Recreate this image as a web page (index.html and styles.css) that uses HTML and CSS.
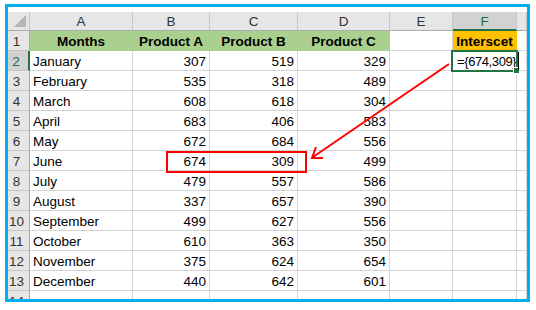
FILE: index.html
```html
<!DOCTYPE html>
<html>
<head>
<meta charset="utf-8">
<link rel="stylesheet" href="styles.css">
</head>
<body>
<div class="frame">
  <div class="sheet">
    <div class="ch corner"><span class="tri"></span></div>
    <div class="ch">A</div><div class="ch">B</div><div class="ch">C</div><div class="ch">D</div><div class="ch">E</div><div class="ch sel">F</div><div class="ch"></div>

    <div class="rh">1</div><div class="c hd">Months</div><div class="c hd">Product A</div><div class="c hd">Product B</div><div class="c hd">Product C</div><div class="c"></div><div class="c hd or">Interscet</div><div class="c"></div>

    <div class="rh rsel">2</div><div class="c">January</div><div class="c n">307</div><div class="c n">519</div><div class="c n">329</div><div class="c"></div><div class="c f2">={674,309}</div><div class="c"></div>
    <div class="rh">3</div><div class="c">February</div><div class="c n">535</div><div class="c n">318</div><div class="c n">489</div><div class="c"></div><div class="c"></div><div class="c"></div>
    <div class="rh">4</div><div class="c">March</div><div class="c n">608</div><div class="c n">618</div><div class="c n">304</div><div class="c"></div><div class="c"></div><div class="c"></div>
    <div class="rh">5</div><div class="c">April</div><div class="c n">683</div><div class="c n">406</div><div class="c n">583</div><div class="c"></div><div class="c"></div><div class="c"></div>
    <div class="rh">6</div><div class="c">May</div><div class="c n">672</div><div class="c n">684</div><div class="c n">556</div><div class="c"></div><div class="c"></div><div class="c"></div>
    <div class="rh">7</div><div class="c">June</div><div class="c n">674</div><div class="c n">309</div><div class="c n">499</div><div class="c"></div><div class="c"></div><div class="c"></div>
    <div class="rh">8</div><div class="c">July</div><div class="c n">479</div><div class="c n">557</div><div class="c n">586</div><div class="c"></div><div class="c"></div><div class="c"></div>
    <div class="rh">9</div><div class="c">August</div><div class="c n">337</div><div class="c n">657</div><div class="c n">390</div><div class="c"></div><div class="c"></div><div class="c"></div>
    <div class="rh">10</div><div class="c">September</div><div class="c n">499</div><div class="c n">627</div><div class="c n">556</div><div class="c"></div><div class="c"></div><div class="c"></div>
    <div class="rh">11</div><div class="c">October</div><div class="c n">610</div><div class="c n">363</div><div class="c n">350</div><div class="c"></div><div class="c"></div><div class="c"></div>
    <div class="rh">12</div><div class="c">November</div><div class="c n">375</div><div class="c n">624</div><div class="c n">654</div><div class="c"></div><div class="c"></div><div class="c"></div>
    <div class="rh">13</div><div class="c">December</div><div class="c n">440</div><div class="c n">642</div><div class="c n">601</div><div class="c"></div><div class="c"></div><div class="c"></div>
    <div class="rh">14</div><div class="c"></div><div class="c"></div><div class="c"></div><div class="c"></div><div class="c"></div><div class="c"></div><div class="c"></div>
  </div>
</div>
<div class="selbox"><span class="handle"></span></div>
<div class="cursor"></div>
<div class="redbox"></div>
<svg class="arrow" width="536" height="310" viewBox="0 0 536 310">
  <line x1="449" y1="64" x2="313" y2="157" stroke="#ff0000" stroke-width="2"/>
  <polyline points="316,147 312,158 323,158" fill="none" stroke="#ff0000" stroke-width="2"/>
</svg>
</body>
</html>
```
FILE: styles.css
```css
html, body {
  margin: 0;
  padding: 0;
  background: #ffffff;
}
body {
  width: 536px;
  height: 310px;
  position: relative;
  font-family: "Liberation Sans", Arial, sans-serif;
  font-size: 13.5px;
  color: #000;
}
.frame {
  margin: 4px 0 0 5px;
  width: 525px;
  height: 298px;
  box-sizing: border-box;
  border: 3px solid #00b0f0;
  padding-top: 5px;
  overflow: hidden;
  background: #fff;
}
.sheet {
  display: grid;
  grid-template-columns: 22px 103px 77px 88px 92px 63px 64px 1fr;
  grid-template-rows: 19px;
  grid-auto-rows: 20px;
}
.ch {
  background: #e6e6e6;
  border-right: 1px solid #c6c6c6;
  border-bottom: 1px solid #ababab;
  box-sizing: border-box;
  text-align: center;
  color: #333;
  line-height: 19px;
  font-size: 13.5px;
}
.ch.sel {
  background: #d2d2d2;
  color: #1e6b41;
  border-bottom: 2px solid #217346;
}
.corner {
  position: relative;
}
.tri {
  position: absolute;
  right: 3px;
  bottom: 3px;
  width: 0;
  height: 0;
  border-left: 12px solid transparent;
  border-bottom: 12px solid #b5b5b5;
}
.rh {
  background: #e6e6e6;
  border-right: 1px solid #ababab;
  border-bottom: 1px solid #c6c6c6;
  box-sizing: border-box;
  text-align: center;
  padding-right: 4px;
  color: #333;
  padding-top: 2px;
  line-height: 18px;
}
.rh.rsel {
  background: #d2d2d2;
  color: #1e6b41;
  border-right: 2px solid #217346;
}
.c {
  border-right: 1px solid #d4d4d4;
  border-bottom: 1px solid #d4d4d4;
  box-sizing: border-box;
  padding: 2px 3px 0 3px;
  line-height: 18px;
  white-space: nowrap;
}
.c.n {
  text-align: right;
}
.c.hd {
  background: #a9d08e;
  border-color: #a9d08e;
  font-weight: bold;
  text-align: center;
}
.c.or {
  background: #ffc000;
  border-color: #ffc000;
}
.c.f2 {
  overflow: visible;
  padding-left: 4px;
  font-size: 13px;
  letter-spacing: -0.4px;
}
.selbox {
  position: absolute;
  left: 451px;
  top: 50px;
  width: 67px;
  height: 22px;
  box-sizing: border-box;
  border: 2px solid #217346;
}
.handle {
  position: absolute;
  right: -4px;
  bottom: -4px;
  width: 5px;
  height: 5px;
  background: #217346;
  border: 1px solid #fff;
}
.cursor {
  position: absolute;
  left: 518px;
  top: 52px;
  width: 1px;
  height: 18px;
  background: #000;
}
.redbox {
  position: absolute;
  left: 166px;
  top: 151px;
  width: 141px;
  height: 22px;
  box-sizing: border-box;
  border: 2px solid #ff0000;
}
.arrow {
  position: absolute;
  left: 0;
  top: 0;
  pointer-events: none;
}
```
